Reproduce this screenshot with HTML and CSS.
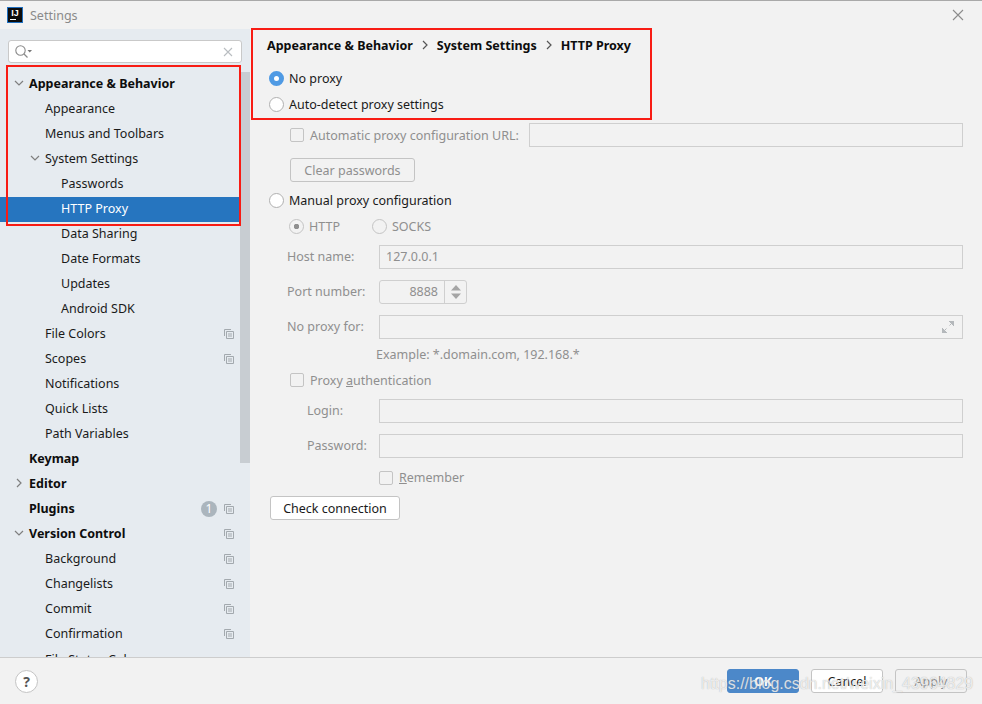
FILE: index.html
```html
<!DOCTYPE html>
<html>
<head>
    <meta charset="utf-8">
    <title>Settings</title>
    <link rel="stylesheet" href="styles.css">
</head>
<body>
    <svg class="defs" width="0" height="0">
        <symbol id="copy" viewBox="0 0 10 10">
            <path d="M.5 7V.5H7M2.500 2.500h7v7h-7zM4 5h4M4 7h4" fill="none" stroke="currentColor"/>
        </symbol>
        <symbol id="down" viewBox="0 0 10 10">
            <path d="M1 3l4 4 4-4" fill="none" stroke="currentColor" stroke-width="1.2"/>
        </symbol>
        <symbol id="right" viewBox="0 0 10 10">
            <path d="M3 1l4 4-4 4" fill="none" stroke="currentColor" stroke-width="1.2"/>
        </symbol>
    </svg>
    <div class="window">
        <div class="titlebar">
            <div class="app-icon"><span>IJ</span><i></i></div>
            <div class="title">Settings</div>
            <svg class="close" width="12" height="12" viewBox="0 0 12 12"><path d="M1 1l10 10M11 1L1 11" stroke="#8c8c8c" stroke-width="1.1"/></svg>
        </div>
        <div class="body">
            <div class="sidebar">
                <div class="search">
                    <svg width="20" height="16" viewBox="0 0 20 16"><circle cx="6.5" cy="6.5" r="4.7" fill="none" stroke="#8a8a8a" stroke-width="1.1"/><path d="M10 10l3.5 3.5" stroke="#8a8a8a" stroke-width="1.3"/><path d="M13.5 6h4.500l-2.250 2.500z" fill="#777"/></svg>
                    <svg class="clear" width="10" height="10" viewBox="0 0 10 10"><path d="M1 1l8 8M9 1L1 9" stroke="#b9bdc1" stroke-width="1.1"/></svg>
                </div>
                <div class="tree-wrap">
                    <div class="tree">
                        <div class="row bold"><svg class="arrow" width="10" height="10"><use href="#down"/></svg>Appearance &amp; Behavior</div>
                        <div class="row l1">Appearance</div>
                        <div class="row l1">Menus and Toolbars</div>
                        <div class="row l1"><svg class="arrow" width="10" height="10"><use href="#down"/></svg>System Settings</div>
                        <div class="row l2">Passwords</div>
                        <div class="row l2 selected">HTTP Proxy</div>
                        <div class="row l2">Data Sharing</div>
                        <div class="row l2">Date Formats</div>
                        <div class="row l2">Updates</div>
                        <div class="row l2">Android SDK</div>
                        <div class="row l1">File Colors<svg class="copy" width="10" height="10"><use href="#copy"/></svg></div>
                        <div class="row l1">Scopes<svg class="copy" width="10" height="10"><use href="#copy"/></svg></div>
                        <div class="row l1">Notifications</div>
                        <div class="row l1">Quick Lists</div>
                        <div class="row l1">Path Variables</div>
                        <div class="row bold">Keymap</div>
                        <div class="row bold"><svg class="arrow" width="10" height="10"><use href="#right"/></svg>Editor</div>
                        <div class="row bold">Plugins<span class="count">1</span><svg class="copy" width="10" height="10"><use href="#copy"/></svg></div>
                        <div class="row bold"><svg class="arrow" width="10" height="10"><use href="#down"/></svg>Version Control<svg class="copy" width="10" height="10"><use href="#copy"/></svg></div>
                        <div class="row l1">Background<svg class="copy" width="10" height="10"><use href="#copy"/></svg></div>
                        <div class="row l1">Changelists<svg class="copy" width="10" height="10"><use href="#copy"/></svg></div>
                        <div class="row l1">Commit<svg class="copy" width="10" height="10"><use href="#copy"/></svg></div>
                        <div class="row l1">Confirmation<svg class="copy" width="10" height="10"><use href="#copy"/></svg></div>
                        <div class="row l1 cut">File Status Colors</div>
                    </div>
                    <div class="scrollbar"><div class="thumb"></div></div>
                </div>
            </div>
            <div class="main">
                <div class="crumbs">
                    <span>Appearance &amp; Behavior</span>
                    <svg width="10" height="10"><use href="#right"/></svg>
                    <span>System Settings</span>
                    <svg width="10" height="10"><use href="#right"/></svg>
                    <span>HTTP Proxy</span>
                </div>
                <div class="opt first"><span class="radio on"></span>No proxy</div>
                <div class="opt"><span class="radio"></span>Auto-detect proxy settings</div>
                <div class="form-auto off">
                    <div class="line-url">
                        <span class="check"></span><span class="url-label">Automatic proxy configuration URL:</span>
                        <div class="field"></div>
                    </div>
                    <div class="btn disabled clear-pw">Clear passwords</div>
                </div>
                <div class="opt manual"><span class="radio"></span>Manual proxy configuration</div>
                <div class="form-manual off">
                    <div class="proto">
                        <span class="radio small dot"></span>HTTP
                        <span class="radio small socks"></span>SOCKS
                    </div>
                    <div class="field-row host"><label>Host name:</label><div class="field">127.0.0.1</div></div>
                    <div class="field-row"><label>Port number:</label>
                        <div class="spinner">
                            <div class="spin-val">8888</div>
                            <div class="spin-btn"><svg width="12" height="16" viewBox="0 0 12 16"><path d="M6 1l5 5.500H1zM6 15l5-5.500H1z" fill="#a5a5a5"/></svg></div>
                        </div>
                    </div>
                    <div class="field-row"><label>No proxy for:</label>
                        <div class="field expand"><svg width="12" height="12" viewBox="0 0 12 12"><path d="M7 0h5v5zM0 12V7l5 5z M9 3L7.500 4.500M3 9l1.500-1.500" fill="#b4b8bb" stroke="#b4b8bb"/></svg></div>
                    </div>
                    <div class="example">Example: *.domain.com, 192.168.*</div>
                    <div class="auth"><span class="check"></span><span>Proxy <u>a</u>uthentication</span></div>
                    <div class="field-row login"><label>Login:</label><div class="field"></div></div>
                    <div class="field-row login pass"><label>Password:</label><div class="field"></div></div>
                    <div class="remember"><span class="check"></span><span><u>R</u>emember</span></div>
                </div>
                <div class="btn check-conn">Check connection</div>
            </div>
        </div>
        <div class="footer">
            <div class="help">?</div>
            <div class="actions">
                <div class="btn action primary">OK</div>
                <div class="btn action">Cancel</div>
                <div class="btn action disabled">Apply</div>
            </div>
        </div>
    </div>

    <!-- annotations drawn over the screenshot -->
    <div class="mark mark-tree"></div>
    <div class="mark mark-head"></div>
    <div class="watermark">https://blog.csdn.net/weixin_43964829</div>
</body>
</html>
```

FILE: styles.css
```css
* {
    box-sizing: border-box;
}
html, body {
    margin: 0;
    height: 100%;
    overflow: hidden;
}
body {
    font-family: "Noto Sans", "Open Sans", sans-serif;
    font-size: 12.5px;
    color: #1a1a1a;
    background: #f2f2f2;
}
.defs {
    position: absolute;
}
.window {
    width: 982px;
    height: 704px;
    display: flex;
    flex-direction: column;
    border-top: 1px solid #a9a9a9;
}
.titlebar {
    height: 28px;
    display: flex;
    align-items: center;
    padding-left: 7px;
    padding-right: 18px;
    flex: none;
}
.app-icon {
    width: 16px;
    height: 16px;
    margin-bottom: 1px;
    background: #0c0c0c;
    border: 1px solid #1f6fc0;
    color: white;
    font-family: "Liberation Sans", sans-serif;
    font-size: 9px;
    font-weight: bold;
    line-height: 10px;
    text-align: center;
    position: relative;
}
.app-icon i {
    position: absolute;
    left: 2px;
    bottom: 2px;
    width: 6px;
    height: 1px;
    background: white;
}
.title {
    margin-left: 7px;
    color: #8a8a8a;
    flex: 1;
}
.body {
    height: 628px;
    display: flex;
    flex: none;
}
.sidebar {
    width: 250px;
    background: #e6ebf0;
    display: flex;
    flex-direction: column;
    overflow: hidden;
}
.search {
    margin: 11px 8px 0;
    height: 23px;
    flex: none;
    background: white;
    border: 1px solid #c9c9c9;
    border-radius: 3px;
    display: flex;
    align-items: center;
    justify-content: space-between;
    padding: 0 8px 0 5px;
}
.tree-wrap {
    position: relative;
    flex: 1;
    margin-top: 9px;
    overflow: hidden;
}
.row {
    height: 25px;
    line-height: 23px;
    padding-left: 29px;
    position: relative;
    white-space: nowrap;
}
.row.cut {
    line-height: 25px;
}
.bold {
    font-weight: bold;
    color: #0d0d0d;
}
.l1 {
    padding-left: 45px;
}
.l2 {
    padding-left: 61px;
}
.selected {
    background: #2675bf;
    color: white;
}
.arrow {
    position: absolute;
    left: 14px;
    top: 6px;
    color: #7f7f7f;
}
.l1 .arrow {
    left: 30px;
}
.copy {
    position: absolute;
    left: 224px;
    top: 7px;
    color: #a3a9ae;
}
.count {
    position: absolute;
    left: 201px;
    top: 4px;
    width: 16px;
    height: 16px;
    border-radius: 50%;
    background: #abb5bd;
    color: white;
    font-size: 12px;
    font-weight: normal;
    line-height: 16px;
    text-align: center;
}
.scrollbar {
    position: absolute;
    top: 0;
    right: 0;
    bottom: 0;
    width: 10px;
}
.thumb {
    height: 391px;
    background: #c8cdd2;
}
.main {
    flex: 1;
    padding: 0 19px 0 20px;
}
.crumbs {
    margin: 6px 0 0 -3px;
    height: 20px;
    display: flex;
    align-items: center;
    gap: 7px;
    font-weight: bold;
    color: #0d0d0d;
}
.crumbs svg {
    color: #555;
}
.opt {
    height: 26px;
    display: flex;
    align-items: center;
}
.first {
    margin-top: 10px;
}
.radio {
    width: 15px;
    height: 15px;
    margin-left: -1px;
    margin-right: 5px;
    border: 1px solid #b0b0b0;
    border-radius: 50%;
    background: white;
    flex: none;
}
.radio.on {
    border: 5px solid #4f9ae4;
}
.off {
    color: #8f8f8f;
}
.off .radio {
    background: #f2f2f2;
    border-color: #c4c4c4;
}
.off .radio.dot {
    background: radial-gradient(circle, #8f8f8f 0 2.5px, #f2f2f2 3px);
}
.check {
    width: 14px;
    height: 14px;
    border: 1px solid #c4c4c4;
    border-radius: 2px;
    flex: none;
}
.form-auto {
    padding-left: 20px;
}
.line-url {
    margin-top: 6px;
    height: 24px;
    display: flex;
    align-items: center;
}
.url-label {
    margin-left: 6px;
    margin-right: 10px;
}
.field {
    flex: 1;
    height: 24px;
    border: 1px solid #cfcfcf;
    padding-left: 6px;
    line-height: 21px;
    position: relative;
}
.btn {
    display: flex;
    align-items: center;
    justify-content: center;
    background: white;
    border: 1px solid #c4c4c4;
    border-radius: 3px;
    height: 24px;
}
.btn.disabled {
    background: #f2f2f2;
    color: #8f8f8f;
}
.clear-pw {
    margin-top: 11px;
    width: 125px;
}
.manual {
    margin-top: 5px;
}
.form-manual {
    padding-left: 17px;
}
.proto {
    padding-left: 3px;
    padding-top: 1px;
    height: 26px;
    display: flex;
    align-items: center;
}
.socks {
    margin-left: 32px;
}
.field-row {
    margin-top: 11px;
    height: 24px;
    display: flex;
    align-items: center;
}
.field-row.host {
    margin-top: 6px;
}
.field-row label {
    width: 92px;
    flex: none;
    padding-bottom: 2px;
}
.spinner {
    width: 88px;
    height: 24px;
    display: flex;
    border: 1px solid #cfcfcf;
    border-radius: 3px;
}
.spin-val {
    flex: 1;
    text-align: right;
    padding-right: 6px;
    line-height: 21px;
}
.spin-btn {
    width: 22px;
    border-left: 1px solid #cfcfcf;
    display: flex;
    align-items: center;
    justify-content: center;
}
.expand svg {
    position: absolute;
    right: 8px;
    top: 5px;
}
.example {
    margin-top: 6px;
    padding-left: 89px;
    height: 22px;
    line-height: 20px;
}
.auth {
    margin-top: 2px;
    padding-left: 3px;
    height: 22px;
    display: flex;
    align-items: center;
    gap: 6px;
}
.login {
    margin-top: 8px;
    padding-left: 20px;
}
.login label {
    width: 72px;
}
.pass {
    margin-top: 11px;
}
.remember {
    margin-top: 9px;
    padding-left: 92px;
    height: 21px;
    display: flex;
    align-items: center;
    gap: 6px;
}
.check-conn {
    margin-top: 8px;
    width: 130px;
}
.footer {
    flex: 1;
    border-top: 1px solid #cdcdcd;
    display: flex;
    align-items: center;
    justify-content: space-between;
    padding: 0 15px;
}
.help {
    width: 23px;
    height: 23px;
    border: 1px solid #c4c4c4;
    border-radius: 50%;
    background: white;
    color: #555;
    font-size: 14px;
    font-weight: bold;
    text-align: center;
    line-height: 21px;
}
.actions {
    display: flex;
    gap: 12px;
}
.action {
    width: 72px;
}
.primary {
    background: #4c88c9;
    border-color: #4c88c9;
    color: white;
    font-weight: bold;
}
.mark {
    position: absolute;
    border: 2px solid #f81c14;
}
.mark-tree {
    left: 6px;
    top: 65px;
    width: 235px;
    height: 161px;
}
.mark-head {
    left: 251px;
    top: 28px;
    width: 401px;
    height: 92px;
}
.watermark {
    position: absolute;
    left: 701px;
    top: 675px;
    font-family: "Liberation Sans", sans-serif;
    font-size: 16px;
    color: rgba(255, 255, 255, 0.75);
    text-shadow: 0 0 1px rgba(120, 120, 120, 0.6);
    white-space: nowrap;
}
```
